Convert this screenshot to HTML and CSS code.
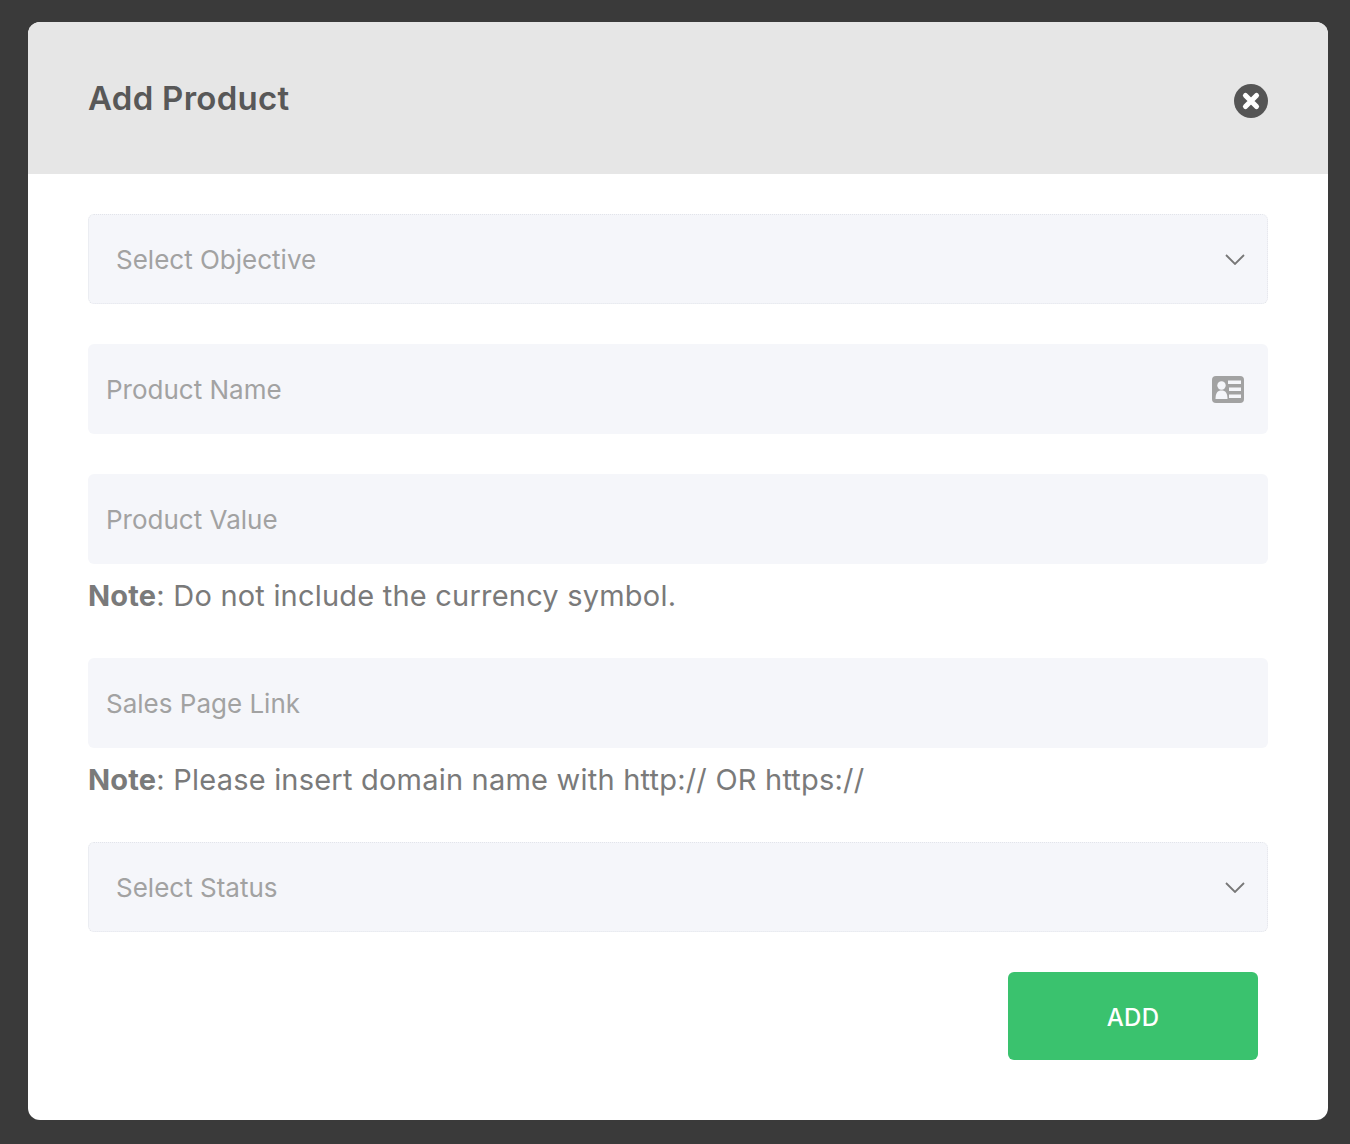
FILE: index.html
```html
<!DOCTYPE html>
<html lang="en">
<head>
<meta charset="utf-8">
<title>Add Product</title>
<link rel="stylesheet" href="styles.css">
</head>
<body>
<div class="modal">
  <header class="modal-head">
    <h1 class="modal-title">Add Product</h1>
    <svg class="close" width="34" height="34" viewBox="0 0 34 34" aria-label="Close">
      <circle cx="17" cy="17" r="17" fill="#555"/>
      <path d="M11.5 11.5 22.500 22.500M22.500 11.500 11.500 22.500" stroke="#fff" stroke-width="5.2" stroke-linecap="round"/>
    </svg>
  </header>
  <form class="modal-body">
    <div class="field select">
      <span class="ph">Select Objective</span>
      <svg class="chev" width="20" height="11" viewBox="0 0 20 11"><path d="M1 1 10 10 19 1" fill="none" stroke="#777" stroke-width="1.8"/></svg>
    </div>
    <div class="field">
      <span class="ph">Product Name</span>
      <svg class="idcard" width="32" height="27" viewBox="0 0 32 27">
        <rect width="32" height="27" rx="4" fill="#a2a2a2"/>
        <circle cx="9.500" cy="9.500" r="4.200" fill="#f5f6fa"/>
        <path d="M3.500 23c0-6 2-8.500 6-8.500s6 2.500 6 8.500z" fill="#f5f6fa"/>
        <path d="M16 4.500h13v3.500H16zM17 11.500h12v3.500H17zM17 18.500h12v3.500H17z" fill="#f5f6fa"/>
      </svg>
    </div>
    <div class="field-group">
      <div class="field"><span class="ph">Product Value</span></div>
      <p class="note"><b>Note</b>: Do not include the currency symbol.</p>
    </div>
    <div class="field-group">
      <div class="field"><span class="ph">Sales Page Link</span></div>
      <p class="note"><b>Note</b>: Please insert domain name with http:// OR https://</p>
    </div>
    <div class="field select">
      <span class="ph">Select Status</span>
      <svg class="chev" width="20" height="11" viewBox="0 0 20 11"><path d="M1 1 10 10 19 1" fill="none" stroke="#777" stroke-width="1.8"/></svg>
    </div>
    <div class="actions"><button class="add" type="button">ADD</button></div>
  </form>
</div>
</body>
</html>
```
FILE: styles.css
```css
* { box-sizing: border-box; }
html, body { margin: 0; height: 100%; }
body {
  background: #3a3a3a;
  padding: 22px 22px 24px 28px;
  font-family: Inter, Lato, sans-serif;
}
.modal {
  width: 1300px;
  height: 1098px;
  background: #fff;
  border-radius: 12px;
  overflow: hidden;
}
.modal-head {
  height: 152px;
  background: #e6e6e6;
  padding: 0 60px;
  display: flex;
  align-items: center;
  justify-content: space-between;
}
.modal-title {
  margin: 0;
  font-size: 33px;
  font-weight: 600;
  color: #585858;
  letter-spacing: 0.27px;
}
.close { margin-top: 5px; }
.modal-body {
  padding: 40px 60px 0;
  display: flex;
  flex-direction: column;
  gap: 40px;
}
.field {
  height: 90px;
  background: #f5f6fa;
  border-radius: 6px;
  display: flex;
  align-items: center;
  justify-content: space-between;
  padding: 0 24px 0 18px;
}
.field.select {
  border: 1px dotted #e2e4ea;
  padding: 0 22px 0 27px;
}
.ph {
  font-size: 26px;
  font-weight: 400;
  color: #a2a2a2;
  letter-spacing: 0;
}
.note {
  margin: 12px 0 0;
  height: 42px;
  line-height: 40px;
  font-size: 29px;
  font-weight: 400;
  color: #7a7a7a;
  letter-spacing: 0.21px;
}
.note b { font-weight: 700; }
.actions {
  display: flex;
  justify-content: flex-end;
  padding-right: 10px;
}
.add {
  width: 250px;
  height: 88px;
  border: 0;
  border-radius: 6px;
  padding: 2px 0 0;
  background: #3ac26e;
  color: #fff;
  font-family: inherit;
  font-size: 24px;
  font-weight: 500;
  letter-spacing: 0.3px;
}
```
